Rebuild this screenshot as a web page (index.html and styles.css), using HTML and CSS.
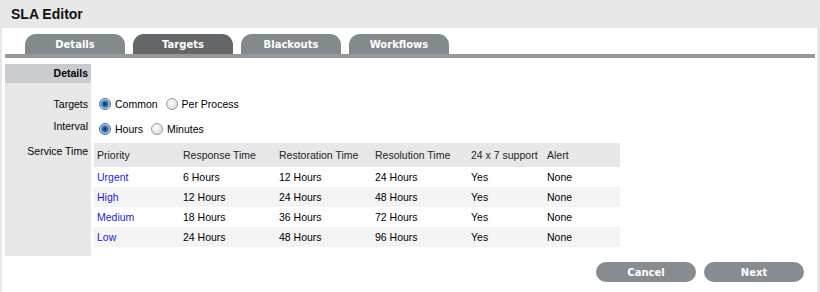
FILE: index.html
```html
<!DOCTYPE html>
<html lang="en">
<head>
    <meta charset="UTF-8">
    <title>SLA Editor</title>
    <link rel="stylesheet" href="styles.css">
</head>
<body>
    <div class="editor">
        <!-- Titel -->
        <div class="title-bar">SLA Editor</div>

        <!-- Tabs -->
        <div class="tabs">
            <div class="tab">Details</div>
            <div class="tab active">Targets</div>
            <div class="tab">Blackouts</div>
            <div class="tab">Workflows</div>
        </div>

        <div class="form">
            <div class="label head">Details</div>
            <div class="field"></div>

            <div class="label row-targets">Targets</div>
            <div class="field row-targets">
                <span class="radio checked"></span><span class="opt">Common</span>
                <span class="radio"></span><span class="opt">Per Process</span>
            </div>

            <div class="label row-interval">Interval</div>
            <div class="field row-interval">
                <span class="radio checked"></span><span class="opt">Hours</span>
                <span class="radio"></span><span class="opt">Minutes</span>
            </div>

            <div class="label row-service">Service Time</div>
            <div class="field row-service">
                <table class="targets">
                    <tr>
                        <th class="c1">Priority</th>
                        <th class="c2">Response Time</th>
                        <th class="c2">Restoration Time</th>
                        <th class="c2">Resolution Time</th>
                        <th class="c5">24 x 7 support</th>
                        <th class="c5">Alert</th>
                    </tr>
                    <tr>
                        <td><a href="#">Urgent</a></td>
                        <td>6 Hours</td>
                        <td>12 Hours</td>
                        <td>24 Hours</td>
                        <td>Yes</td>
                        <td>None</td>
                    </tr>
                    <tr>
                        <td><a href="#">High</a></td>
                        <td>12 Hours</td>
                        <td>24 Hours</td>
                        <td>48 Hours</td>
                        <td>Yes</td>
                        <td>None</td>
                    </tr>
                    <tr>
                        <td><a href="#">Medium</a></td>
                        <td>18 Hours</td>
                        <td>36 Hours</td>
                        <td>72 Hours</td>
                        <td>Yes</td>
                        <td>None</td>
                    </tr>
                    <tr>
                        <td><a href="#">Low</a></td>
                        <td>24 Hours</td>
                        <td>48 Hours</td>
                        <td>96 Hours</td>
                        <td>Yes</td>
                        <td>None</td>
                    </tr>
                </table>
            </div>
        </div>

        <!-- Buttons unten rechts -->
        <div class="buttons">
            <button class="btn">Cancel</button>
            <button class="btn">Next</button>
        </div>
    </div>
</body>
</html>
```

FILE: styles.css
```css
body {
    margin: 0;
    padding: 0;
    background: #ffffff;
    font-family: "Liberation Sans", Arial, sans-serif;
    font-size: 10.5px;
    color: #000;
}

.editor {
    width: 815px;
    height: 292px;
    border-left: 2px solid #e8e8e8;
    border-right: 3px solid #e8e8e8;
    box-sizing: content-box;
}

.title-bar {
    height: 28px;
    line-height: 28px;
    background: #e8e8e8;
    padding-left: 9px;
    font-size: 14px;
    font-weight: bold;
    color: #111;
}

.tabs {
    display: flex;
    gap: 8px;
    margin: 6px 2px 0 3px;
    padding-left: 20px;
    border-bottom: 4px solid #999999;
}

.tab {
    width: 100px;
    height: 20px;
    line-height: 21px;
    text-align: center;
    background: #828a8e;
    color: #fff;
    font-family: "DejaVu Sans", Verdana, sans-serif;
    font-size: 10px;
    font-weight: bold;
    border-radius: 11px 11px 0 0;
}

.tab.active {
    background: #646769;
}

.form {
    display: grid;
    grid-template-columns: 86px 1fr;
    grid-template-rows: 19px 34px 26px auto;
    column-gap: 3px;
    margin: 6px 2px 0 3px;
}

.label {
    background: #e8e8e8;
    text-align: right;
    padding-right: 3px;
    line-height: 14px;
}

.label.head {
    background: #c9cbce;
    font-weight: bold;
    line-height: 19px;
}

.row-targets {
    padding-top: 14px;
}

.row-interval {
    padding-top: 5px;
}

.label.row-interval {
    padding-top: 2px;
}

.label.row-service {
    padding-top: 1px;
}

.field {
    display: flex;
    align-items: center;
    height: 14px;
    line-height: 14px;
}

.field.row-service {
    height: auto;
    align-items: flex-start;
    padding-bottom: 9px;
}

.radio {
    display: inline-block;
    width: 10px;
    height: 10px;
    border-radius: 50%;
    border: 1px solid #9a9a9a;
    background: radial-gradient(circle at 40% 35%, #ffffff 0%, #e4e4e4 60%, #c8c8c8 100%);
    margin: 0 4px 0 5px;
}

.radio.checked {
    border-color: #5b6d80;
    background: radial-gradient(circle at 50% 50%, #0b2a55 0, #1f5fa8 30%, #6fa8e0 55%, #dfe9f3 75%, #c8d3de 100%);
}

.opt {
    margin-right: 3px;
}

.targets {
    width: 526px;
    border-collapse: collapse;
    table-layout: fixed;
}

.targets th {
    background: #e8e8e8;
    font-weight: normal;
    text-align: left;
    height: 24px;
    padding: 0 0 0 3px;
    color: #222;
}

.targets td {
    height: 20px;
    padding: 0 0 0 3px;
}

.targets tr:nth-child(odd) td {
    background: #f4f4f4;
}

.c1 { width: 83px; }
.c2 { width: 93px; }
.c5 { width: 73px; }

.targets a {
    color: #2222dd;
    text-decoration: none;
}

.buttons {
    display: flex;
    justify-content: flex-end;
    gap: 8px;
    margin: 6px 13px 0 0;
}

.btn {
    width: 100px;
    height: 20px;
    border: none;
    border-radius: 10px;
    background: #868c90;
    color: #fff;
    font-family: "DejaVu Sans", Verdana, sans-serif;
    font-size: 10px;
    font-weight: bold;
    padding: 0;
    cursor: pointer;
}
```
